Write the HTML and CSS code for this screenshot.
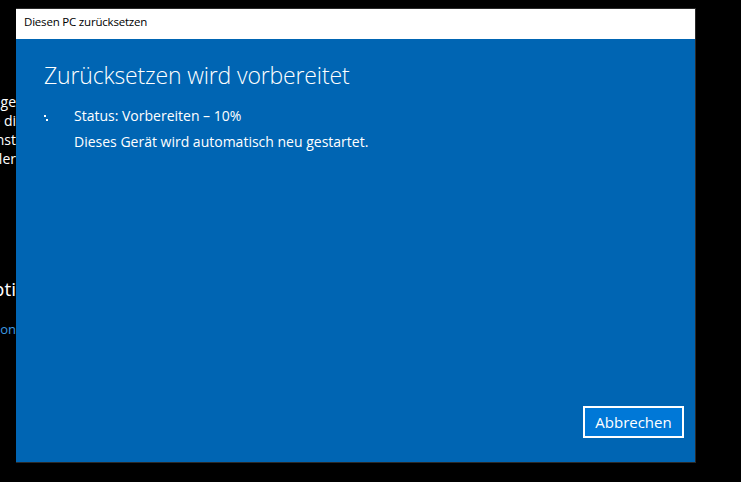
FILE: index.html
```html
<!DOCTYPE html>
<html lang="de">
<head>
    <meta charset="UTF-8">
    <meta name="viewport" content="width=device-width, initial-scale=1.0">
    <title>Diesen PC zurücksetzen</title>
    <link rel="stylesheet" href="styles.css">
</head>
<body>
    <div class="screen">
        <div class="behind">
            <div class="behind-text">
                <p>Bei Problemen mit der Anzeige</p>
                <p>Wählen Sie di</p>
                <p>Windows neu inst</p>
                <p>Bei Fehler</p>
            </div>
            <h2 class="behind-heading">Erweiterte Opti</h2>
            <p class="behind-link">Weitere Wiederherstellungsoption</p>
        </div>

        <div class="dialog">
            <div class="titlebar">Diesen PC zurücksetzen</div>
            <div class="content">
                <h1>Zurücksetzen wird vorbereitet</h1>
                <div class="status">
                    <div class="spinner">
                        <svg width="30" height="26" viewBox="0 0 30 26">
                            <rect x="0" y="12" width="2" height="2" fill="#fff"/>
                            <rect x="2" y="16" width="2" height="2" fill="#fff"/>
                        </svg>
                    </div>
                    <div class="status-text">
                        <p>Status: Vorbereiten – 10%</p>
                        <p>Dieses Gerät wird automatisch neu gestartet.</p>
                    </div>
                </div>
                <div class="footer">
                    <button class="cancel">Abbrechen</button>
                </div>
            </div>
        </div>
    </div>
</body>
</html>
```

FILE: styles.css
```css
body { margin: 0; background: #000; font-family: "Open Sans", "Noto Sans", sans-serif; color: #fff; }
p, h1, h2 { margin: 0; }
.screen { display: flex; align-items: flex-start; height: 482px; overflow: hidden; }

.behind { width: 16px; flex-shrink: 0; overflow: hidden; padding-top: 92px; }
.behind p, .behind h2 { display: flex; justify-content: flex-end; white-space: nowrap; }
.behind-text p { font-size: 14px; line-height: 19px; }
.behind-heading { margin-top: 107px; font-size: 19px; line-height: 28px; font-weight: 400; }
.behind-link { margin-top: 16px; font-size: 13px; line-height: 20px; color: #3d9be3; }

.dialog { margin-top: 8px; width: 680px; height: 455px; box-sizing: border-box; border: 1px solid #2a2a2a; border-left: none; display: flex; flex-direction: column; }
.titlebar { height: 30px; box-sizing: border-box; padding: 5px 0 0 8px; background: #fff; color: #000; font-size: 11.5px; letter-spacing: -0.2px; line-height: 16px; }
.content { flex: 1; background: #0065b3; padding: 20px 11px 24px 28px; display: flex; flex-direction: column; }
.content h1 { font-size: 23px; letter-spacing: -0.15px; line-height: 32px; font-weight: 300; }
.status { display: flex; margin-top: 12px; }
.spinner { width: 30px; flex-shrink: 0; }
.spinner svg { display: block; }
.status-text p { font-size: 14px; line-height: 26px; }
.footer { margin-top: auto; display: flex; justify-content: flex-end; }
.cancel { width: 101px; height: 32px; background: #0078d7; color: #fff; border: 2px solid #fff; font-family: inherit; font-size: 15px; padding: 0; }
```
